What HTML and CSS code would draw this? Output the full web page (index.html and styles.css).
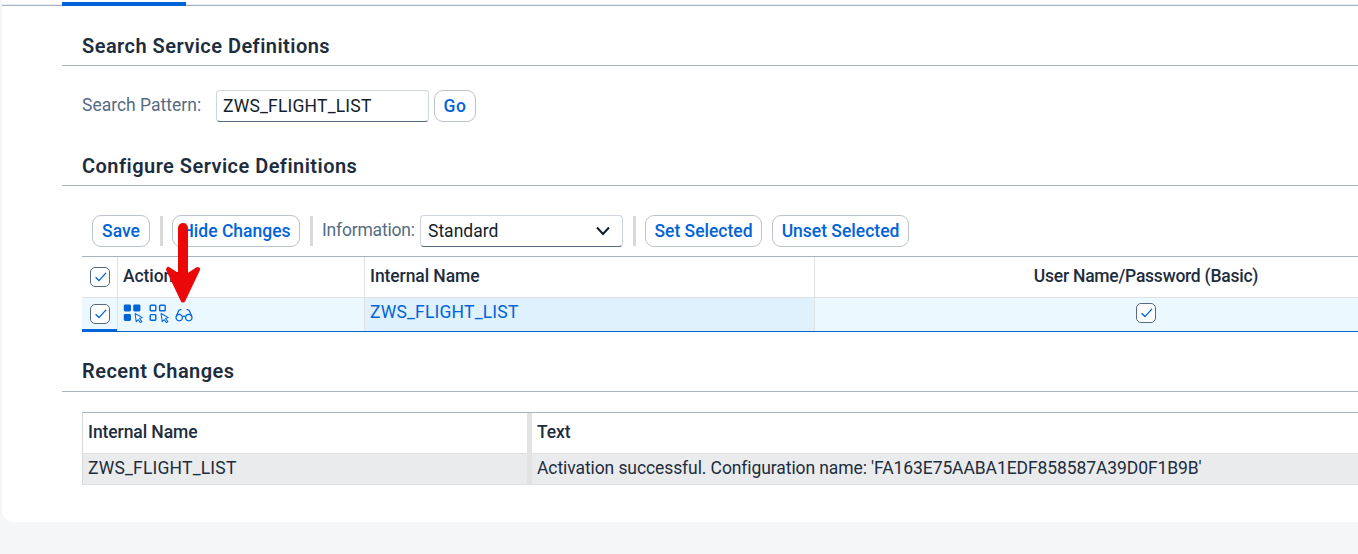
FILE: index.html
```html
<!DOCTYPE html>
<html lang="en">
<head>
<meta charset="utf-8">
<title>Service Definitions</title>
<link rel="stylesheet" href="styles.css">
</head>
<body>
<svg class="defs" width="0" height="0">
  <symbol id="check" viewBox="0 0 20 20"><path d="M5.6 10.2 9 13.6 16 5.9" fill="none" stroke="#0064d9" stroke-width="1.35"/></symbol>
  <symbol id="cursor" viewBox="0 0 10 12"><path d="M1.1 1.2 9 5.7 6 6.7 8.6 10 7 11.2 4.6 8 2.4 10.1Z" fill="none" stroke="#0064d9" stroke-width="1.1" stroke-linejoin="round"/></symbol>
</svg>
<main class="card">
  <div class="tabs"><div class="tab-active"></div></div>

  <h2 class="title first">Search Service Definitions</h2>
  <div class="form">
    <label class="label">Search Pattern:</label>
    <div class="field pattern"><span class="ident">ZWS_FLIGHT_LIST</span></div>
    <button class="btn go">Go</button>
  </div>

  <h2 class="title second">Configure Service Definitions</h2>
  <div class="toolbar">
    <button class="btn save">Save</button>
    <i class="sep sep-a"></i>
    <button class="btn hide">Hide Changes</button>
    <i class="sep sep-b"></i>
    <label class="label info">Information:</label>
    <div class="field select"><span>Standard</span>
      <svg width="14" height="10" viewBox="0 0 14 10"><path d="M1 1.500 7 8 13 1.500" fill="none" stroke="#131e29" stroke-width="2"/></svg>
    </div>
    <i class="sep sep-c"></i>
    <button class="btn set">Set Selected</button>
    <button class="btn unset">Unset Selected</button>
  </div>

  <div class="services">
    <div class="row head">
      <div class="c-check"><span class="box"><svg width="20" height="20"><use href="#check"/></svg></span></div>
      <div class="c-actions">Actions</div>
      <div class="c-name">Internal Name</div>
      <div class="c-auth">User Name/Password (Basic)</div>
    </div>
    <div class="row selected">
      <div class="c-check"><span class="box"><svg width="20" height="20"><use href="#check"/></svg></span></div>
      <div class="c-actions icons">
        <svg width="21" height="20" viewBox="0 0 21 20"><g fill="#0064d9"><rect x=".8" y=".5" width="7.2" height="7" rx="1.4"/><rect x="10.2" y=".5" width="7.2" height="7" rx="1.4"/><rect x=".8" y="9.900" width="7.2" height="7" rx="1.4"/></g><use href="#cursor" x="10.600" y="8.400" width="10" height="11"/></svg>
        <svg width="21" height="20" viewBox="0 0 21 20"><g fill="none" stroke="#0064d9" stroke-width="1.4"><rect x="1.200" y="1.200" width="5.600" height="5.600" rx=".9"/><rect x="10.600" y="1.200" width="5.600" height="5.600" rx=".9"/><rect x="1.200" y="10.600" width="5.600" height="5.600" rx=".9"/></g><use href="#cursor" x="10.600" y="8.400" width="10" height="11"/></svg>
        <svg width="18" height="20" viewBox="0 0 18 20"><g fill="none" stroke="#0064d9" stroke-width="1.2"><circle cx="4.200" cy="13.600" r="3.200"/><circle cx="13.800" cy="13.600" r="3.200"/><path d="M7.2 13Q9 11.300 10.800 13M1.200 12.700 3.600 6.900Q4.300 5.400 6.200 5.700M16.800 12.700 14.400 6.900Q13.700 5.400 11.800 5.700"/></g></svg>
      </div>
      <div class="c-name link"><span class="ident">ZWS_FLIGHT_LIST</span></div>
      <div class="c-auth"><span class="box"><svg width="20" height="20"><use href="#check"/></svg></span></div>
    </div>
  </div>

  <h2 class="title third">Recent Changes</h2>
  <div class="changes">
    <div class="row head">
      <div class="c-left">Internal Name</div>
      <div class="c-text">Text</div>
    </div>
    <div class="row gray">
      <div class="c-left"><span class="ident">ZWS_FLIGHT_LIST</span></div>
      <div class="c-text message">Activation successful. Configuration name: 'FA163E75AABA1EDF858587A39D0F1B9B'</div>
    </div>
  </div>
</main>
<svg class="arrow" width="40" height="82" viewBox="0 0 40 82"><path d="M20 5V58" stroke="#eb0808" stroke-width="10" stroke-linecap="round"/><path d="M5.500 46.500 20 77 34.500 46.500 20 56Z" fill="#eb0808" stroke="#eb0808" stroke-width="5" stroke-linejoin="round"/></svg>
</body>
</html>
```
FILE: styles.css
```css
* { box-sizing: border-box; }
body { margin: 0; height: 554px; padding-left: 2px; overflow: hidden; background: #f5f6f7; font-family: Roboto, "Liberation Sans", sans-serif; font-size: 17.5px; line-height: 20px; color: #1d2d3e; position: relative; white-space: nowrap; }
.defs { position: absolute; }
.card { height: 522px; background: #fff; border-radius: 0 0 0 12px; overflow: hidden; }
.tabs { height: 6px; padding: 2px 0 0 60px; border-bottom: 1px solid #a8b3bf; box-shadow: inset 0 -1px #e9ecef; }
.tab-active { position: relative; width: 124px; height: 4px; background: #0064d9; }

.title { margin: 0 0 0 60px; padding-left: 20px; display: flex; align-items: flex-end; font-size: 20px; letter-spacing: 0.46px; line-height: 24px; font-weight: 600; border-bottom: 1px solid #a8b3bf; }
.first { height: 60px; padding-bottom: 7px; }
.second { height: 64px; padding-bottom: 7px; }
.third { height: 60px; padding-bottom: 8px; }

.form { height: 56px; padding: 24px 0 0 80px; display: flex; }
.label { color: #556b82; padding-top: 5px; }
.form .label { width: 134px; }
.ident { letter-spacing: 0.19px; }
.field { height: 32px; display: flex; align-items: center; padding: 0 6px; border: 1px solid #cfd5dc; border-bottom-color: #556b82; border-radius: 4px; color: #131e29; background: #fff; }
.pattern { width: 213px; }
.btn { height: 32px; padding: 0 0 1px; display: flex; align-items: center; justify-content: center; border: 1px solid #bcc3ca; border-radius: 9px; background: #fff; color: #0064d9; font: 500 17.5px/20px Roboto, sans-serif; }
.go { width: 42px; margin-left: 5px; letter-spacing: 0.5px; }

.toolbar { height: 70px; padding: 29px 0 0 90px; display: flex; }
.sep { width: 3px; height: 30px; margin-top: 1px; background: #d9d9d9; }
.save { width: 58px; }
.sep-a { margin-left: 10px; }
.hide { width: 128px; margin-left: 9px; }
.sep-b { margin-left: 10px; }
.info { width: 98px; margin-left: 9px; letter-spacing: -0.2px; }
.select { width: 203px; justify-content: space-between; padding: 0 12px 0 7px; }
.sep-c { margin-left: 10px; }
.set { width: 117px; margin-left: 9px; }
.unset { width: 137px; margin-left: 10px; }

.services { margin-left: 80px; border-top: 1px solid #a8b3bf; }
.row { display: flex; }
.row > div { flex-shrink: 0; padding-left: 5px; }
.services .head { height: 41px; border-bottom: 1px solid #e1e1e1; }
.services .row > div { border-right: 1px solid #e1e1e1; }
.services .row > .c-auth { border-right: 0; }
.services .c-check { width: 36px; padding: 10px 0 0 8px; }
.c-actions { width: 247px; }
.c-name { width: 450px; }
.row > .c-auth { width: 662px; padding-left: 0; text-align: center; letter-spacing: -0.24px; }
.head > div { padding-top: 9px; font-weight: 500; letter-spacing: -0.08px; }
.services .selected { height: 34px; border-bottom: 1px solid #0064d9; background: #ebf8ff; }
.selected > .c-check { padding-top: 6px; box-shadow: inset 0 -2px #0064d9; }
.services .selected > .c-check { padding-top: 6px; }
.selected .c-name { background: #def1fd; }
.box { display: inline-block; width: 20px; height: 20px; border: 1px solid #556b82; border-radius: 5px; background: #fff; }
.box svg { display: block; margin: -1px; }
.icons { display: flex; gap: 5px; padding-top: 6px; }
.link { color: #0064d9; padding-top: 4px; }
.selected .c-auth { padding-top: 5px; }

.changes { margin: 20px 0 0 80px; border-top: 1px solid #a8b3bf; border-left: 1px solid #d9d9d9; }
.changes .head { height: 41px; border-bottom: 1px solid #e1e1e1; }
.changes .gray { height: 31px; border-bottom: 1px solid #dfe1e3; background: #eaebec; }
.changes .row > .c-left { width: 449px; border-right: 5px solid #e3e3e3; }
.gray > div { padding-top: 4px; }
.message { letter-spacing: -0.09px; }
.arrow { position: absolute; left: 163px; top: 223px; }
```
